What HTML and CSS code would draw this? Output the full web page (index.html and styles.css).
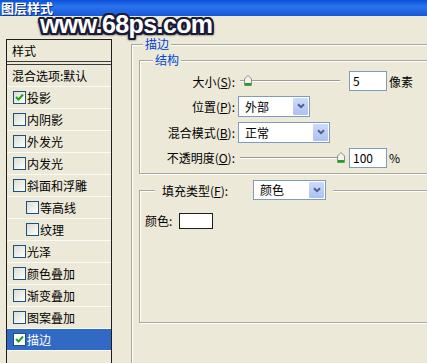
FILE: index.html
```html
<!DOCTYPE html>
<html lang="zh-CN">
<head>
<meta charset="utf-8">
<title>图层样式</title>
<link rel="stylesheet" href="styles.css">
</head>
<body>
<div class="titlebar"><span class="title">图层样式</span></div>
<div class="watermark">www.68ps.com</div>
<div class="main">
  <div class="sidebar">
    <div class="side-head">样式</div>
    <ul class="side-list">
      <li class="row plain">混合选项:默认</li>
      <li class="row"><span class="cb"><svg viewBox="0 0 11 11"><polyline points="2,5 4.5,7.5 9,2.5"/></svg></span>投影</li>
      <li class="row"><span class="cb"></span>内阴影</li>
      <li class="row"><span class="cb"></span>外发光</li>
      <li class="row"><span class="cb"></span>内发光</li>
      <li class="row"><span class="cb"></span>斜面和浮雕</li>
      <li class="row sub"><span class="cb"></span>等高线</li>
      <li class="row sub"><span class="cb"></span>纹理</li>
      <li class="row"><span class="cb"></span>光泽</li>
      <li class="row"><span class="cb"></span>颜色叠加</li>
      <li class="row"><span class="cb"></span>渐变叠加</li>
      <li class="row"><span class="cb"></span>图案叠加</li>
      <li class="row selected"><span class="cb"><svg viewBox="0 0 11 11"><polyline points="2,5 4.5,7.5 9,2.5"/></svg></span>描边</li>
    </ul>
  </div>
  <div class="panel">
    <fieldset class="group outer">
      <legend class="glegend">描边</legend>
      <fieldset class="group struct">
        <legend class="glegend struct-legend">结构</legend>
        <div class="form">
          <span class="lbl">大小(<u>S</u>):</span>
          <div class="ctrl">
            <div class="slider"><span class="track"></span><svg class="thumb thumb-min" viewBox="0 0 8 11"><path d="M4 0.5 L7.5 4 L7.5 10.5 L0.5 10.5 L0.5 4 Z"/><rect x="1" y="8" width="6" height="2.5"/></svg></div>
            <span class="num">5</span><span class="unit">像素</span>
          </div>
          <span class="lbl">位置(<u>P</u>):</span>
          <div class="ctrl">
            <div class="select w-pos"><span class="sel-text">外部</span><span class="sel-btn"><svg viewBox="0 0 8 6"><polyline points="1,1.2 4,4.2 7,1.2"/></svg></span></div>
          </div>
          <span class="lbl">混合模式(<u>B</u>):</span>
          <div class="ctrl">
            <div class="select w-mode"><span class="sel-text">正常</span><span class="sel-btn"><svg viewBox="0 0 8 6"><polyline points="1,1.2 4,4.2 7,1.2"/></svg></span></div>
          </div>
          <span class="lbl">不透明度(<u>O</u>):</span>
          <div class="ctrl">
            <div class="slider"><span class="track"></span><svg class="thumb thumb-max" viewBox="0 0 8 11"><path d="M4 0.5 L7.5 4 L7.5 10.5 L0.5 10.5 L0.5 4 Z"/><rect x="1" y="8" width="6" height="2.5"/></svg></div>
            <span class="num">100</span><span class="unit">%</span>
          </div>
        </div>
      </fieldset>
      <fieldset class="group fill">
        <legend class="fill-legend">
          <span class="fill-lbl">填充类型(<u>F</u>):</span>
          <span class="select w-fill"><span class="sel-text">颜色</span><span class="sel-btn"><svg viewBox="0 0 8 6"><polyline points="1,1.2 4,4.2 7,1.2"/></svg></span></span>
        </legend>
        <div class="fill-body">
          <span class="color-lbl">颜色:</span><span class="swatch"></span>
        </div>
      </fieldset>
    </fieldset>
  </div>
</div>
</body>
</html>
```

FILE: styles.css
```css
html, body {
  margin: 0;
  padding: 0;
}
body {
  width: 427px;
  height: 363px;
  overflow: hidden;
  background: #ECE9D8;
  font-family: "Noto Sans CJK SC", "Liberation Sans", sans-serif;
  font-size: 12px;
  color: #000;
  position: relative;
}

.titlebar {
  height: 16px;
  background: linear-gradient(to bottom, #0b50d8 0%, #2a73ec 40%, #1f64e2 75%, #1858d6 100%);
}
.title {
  display: block;
  padding-left: 1px;
  color: #fff;
  font-weight: bold;
  font-size: 13px;
  line-height: 15px;
  text-shadow: 1px 1px 0 #0c2a80;
}

.watermark {
  position: absolute;
  left: 40px;
  top: 12px;
  font-family: "Liberation Sans", sans-serif;
  font-weight: bold;
  font-size: 25px;
  line-height: 25px;
  color: #fff;
  letter-spacing: -0.6px;
  text-shadow:
    2px 0 0 #1b1b36, -2px 0 0 #1b1b36, 0 2px 0 #1b1b36, 0 -2px 0 #1b1b36,
    1.5px 1.5px 0 #1b1b36, -1.5px 1.5px 0 #1b1b36, 1.5px -1.5px 0 #1b1b36, -1.5px -1.5px 0 #1b1b36,
    2px 1px 0 #1b1b36, -2px 1px 0 #1b1b36, 2px -1px 0 #1b1b36, -2px -1px 0 #1b1b36,
    1px 2px 0 #1b1b36, -1px 2px 0 #1b1b36, 1px -2px 0 #1b1b36, -1px -2px 0 #1b1b36,
    2px 2px 2px #1b1b36, -2px 2px 2px #1b1b36;
}

.main {
  display: flex;
  align-items: flex-start;
  padding-top: 21px;
}

/* ---------- left list ---------- */
.sidebar {
  margin-top: 2px;
  margin-left: 6px;
  width: 106px;
  height: 340px;
  box-sizing: border-box;
  border: 1px solid #1e1e1e;
  flex: none;
}
.side-head {
  height: 21px;
  line-height: 21px;
  padding-left: 5px;
  border-bottom: 1px solid #3a3a3a;
  margin-bottom: 2px;
}
.side-list {
  list-style: none;
  margin: 0;
  padding: 0;
  border-top: 1px solid #3a3a3a;
}
.row {
  display: flex;
  align-items: center;
  height: 21px;
  border-bottom: 1px solid #fbfaf6;
  padding-left: 6px;
  white-space: nowrap;
}
.row.plain {
  padding-left: 5px;
}
.row.sub {
  padding-left: 19px;
}
.row.selected {
  background: #316AC5;
  color: #fff;
}
.cb {
  width: 13px;
  height: 13px;
  box-sizing: border-box;
  border: 1px solid #1c5180;
  background: linear-gradient(135deg, #dcdcd5 0%, #f1f1ec 60%, #fdfdfb 100%);
  margin-right: 1px;
  display: flex;
  flex: none;
}
.cb svg {
  width: 11px;
  height: 11px;
  fill: none;
  stroke: #21a121;
  stroke-width: 2;
}
.row.selected .cb {
  background: #fff;
}

/* ---------- right panel ---------- */
.panel {
  margin-left: 19px;
  flex: none;
}
.group {
  margin: 0;
  padding: 0;
  min-width: 0;
  border: 1px solid #aca899;
  box-shadow: inset 1px 1px 0 #fff, 1px 1px 0 #fff;
}
.outer {
  width: 320px;
  height: 345px;
  box-sizing: border-box;
}
.glegend {
  margin-left: 11px;
  padding: 0 2px;
  line-height: 14px;
  color: #0046d5;
  background: #ECE9D8;
}
.struct {
  margin: 2px 0 0 7px;
  width: 300px;
}
.struct-legend {
  margin-left: 13px;
}
.form {
  display: grid;
  grid-template-columns: 95px 1fr;
  grid-template-rows: 24px 26px 26px 25px;
  column-gap: 3px;
  padding: 2px 0 3px 0;
  align-items: center;
}
.lbl {
  text-align: right;
  white-space: nowrap;
}
.ctrl {
  display: flex;
  align-items: center;
}
.slider {
  position: relative;
  width: 107px;
  height: 12px;
  flex: none;
}
.track {
  position: absolute;
  left: 2px;
  top: 5px;
  width: 100px;
  height: 1px;
  background: #9d9b8f;
  border-bottom: 1px solid #fff;
}
.thumb {
  position: absolute;
  top: 0;
  width: 8px;
  height: 11px;
}
.thumb path {
  fill: #f3f3ee;
  stroke: #8f8e86;
  stroke-width: 1;
}
.thumb rect {
  fill: #21a121;
}
.thumb-min {
  left: 6px;
}
.thumb-max {
  left: 99px;
}
.num {
  margin-left: 4px;
  width: 38px;
  height: 20px;
  box-sizing: border-box;
  border: 1px solid #7f9db9;
  background: #fff;
  padding-left: 3px;
  line-height: 18px;
}
.unit {
  margin-left: 2px;
}
.select {
  display: flex;
  align-items: stretch;
  height: 21px;
  box-sizing: border-box;
  border: 1px solid #7f9db9;
  background: #fff;
}
.w-pos { width: 72px; }
.w-mode { width: 92px; }
.w-fill { width: 73px; height: 20px; }
.sel-text {
  flex: 1;
  padding-left: 6px;
  line-height: 19px;
}
.w-fill .sel-text { line-height: 18px; }
.sel-btn {
  width: 15px;
  margin: 1px;
  border-radius: 1px;
  background: linear-gradient(to bottom, #cddbfc 0%, #b9cbf6 60%, #adc1f3 100%);
  display: flex;
  align-items: center;
  justify-content: center;
}
.sel-btn svg {
  width: 8px;
  height: 6px;
  fill: none;
  stroke: #4d6185;
  stroke-width: 2;
}
.fill {
  margin: 6px 0 0 7px;
  width: 300px;
}
.fill-legend {
  margin-left: 15px;
  padding: 0 7px;
  display: flex;
  align-items: center;
  background: #ECE9D8;
}
.fill-lbl {
  width: 91px;
  white-space: nowrap;
}
.fill-body {
  height: 122px;
  box-sizing: border-box;
  padding: 13px 0 0 5px;
  display: flex;
  align-items: flex-start;
}
.color-lbl {
  width: 34px;
  line-height: 16px;
}
.swatch {
  width: 34px;
  height: 16px;
  box-sizing: border-box;
  border: 1px solid #1e1e1e;
  background: #fff;
}
```
